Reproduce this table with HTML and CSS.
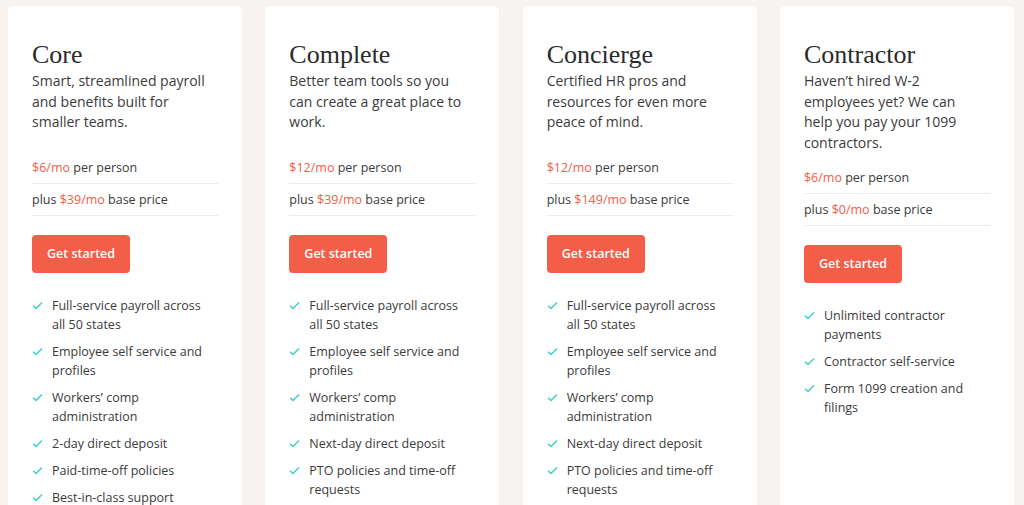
FILE: index.html
```html
<!DOCTYPE html>
<html lang="en">
<head>
<meta charset="utf-8">
<title>Pricing plans</title>
<link rel="stylesheet" href="styles.css">
</head>
<body>
<main class="plans">
  <section class="card">
    <h2 class="title">Core</h2>
    <p class="desc">Smart, streamlined payroll and benefits built for smaller teams.</p>
    <ul class="prices">
      <li><span class="accent">$6/mo</span> per person</li>
      <li>plus <span class="accent">$39/mo</span> base price</li>
    </ul>
    <a class="btn" href="#">Get started</a>
    <ul class="features">
      <li><svg class="check" viewBox="0 0 12 10"><path d="M1 5.2 4.3 8.4 11 1.6"/></svg><span>Full-service payroll across all 50 states</span></li>
      <li><svg class="check" viewBox="0 0 12 10"><path d="M1 5.2 4.3 8.4 11 1.6"/></svg><span>Employee self service and profiles</span></li>
      <li><svg class="check" viewBox="0 0 12 10"><path d="M1 5.2 4.3 8.4 11 1.6"/></svg><span>Workers’ comp administration</span></li>
      <li><svg class="check" viewBox="0 0 12 10"><path d="M1 5.2 4.3 8.4 11 1.6"/></svg><span>2-day direct deposit</span></li>
      <li><svg class="check" viewBox="0 0 12 10"><path d="M1 5.2 4.3 8.4 11 1.6"/></svg><span>Paid-time-off policies</span></li>
      <li><svg class="check" viewBox="0 0 12 10"><path d="M1 5.2 4.3 8.4 11 1.6"/></svg><span>Best-in-class support</span></li>
    </ul>
  </section>
  <section class="card">
    <h2 class="title">Complete</h2>
    <p class="desc">Better team tools so you can create a great place to work.</p>
    <ul class="prices">
      <li><span class="accent">$12/mo</span> per person</li>
      <li>plus <span class="accent">$39/mo</span> base price</li>
    </ul>
    <a class="btn" href="#">Get started</a>
    <ul class="features">
      <li><svg class="check" viewBox="0 0 12 10"><path d="M1 5.2 4.3 8.4 11 1.6"/></svg><span>Full-service payroll across all 50 states</span></li>
      <li><svg class="check" viewBox="0 0 12 10"><path d="M1 5.2 4.3 8.4 11 1.6"/></svg><span>Employee self service and profiles</span></li>
      <li><svg class="check" viewBox="0 0 12 10"><path d="M1 5.2 4.3 8.4 11 1.6"/></svg><span>Workers’ comp administration</span></li>
      <li><svg class="check" viewBox="0 0 12 10"><path d="M1 5.2 4.3 8.4 11 1.6"/></svg><span>Next-day direct deposit</span></li>
      <li><svg class="check" viewBox="0 0 12 10"><path d="M1 5.2 4.3 8.4 11 1.6"/></svg><span>PTO policies and time-off requests</span></li>
    </ul>
  </section>
  <section class="card">
    <h2 class="title">Concierge</h2>
    <p class="desc">Certified HR pros and resources for even more peace of mind.</p>
    <ul class="prices">
      <li><span class="accent">$12/mo</span> per person</li>
      <li>plus <span class="accent">$149/mo</span> base price</li>
    </ul>
    <a class="btn" href="#">Get started</a>
    <ul class="features">
      <li><svg class="check" viewBox="0 0 12 10"><path d="M1 5.2 4.3 8.4 11 1.6"/></svg><span>Full-service payroll across all 50 states</span></li>
      <li><svg class="check" viewBox="0 0 12 10"><path d="M1 5.2 4.3 8.4 11 1.6"/></svg><span>Employee self service and profiles</span></li>
      <li><svg class="check" viewBox="0 0 12 10"><path d="M1 5.2 4.3 8.4 11 1.6"/></svg><span>Workers’ comp administration</span></li>
      <li><svg class="check" viewBox="0 0 12 10"><path d="M1 5.2 4.3 8.4 11 1.6"/></svg><span>Next-day direct deposit</span></li>
      <li><svg class="check" viewBox="0 0 12 10"><path d="M1 5.2 4.3 8.4 11 1.6"/></svg><span>PTO policies and time-off requests</span></li>
    </ul>
  </section>
  <section class="card">
    <h2 class="title">Contractor</h2>
    <p class="desc">Haven’t hired W-2 employees yet? We can help you pay your 1099 contractors.</p>
    <ul class="prices">
      <li><span class="accent">$6/mo</span> per person</li>
      <li>plus <span class="accent">$0/mo</span> base price</li>
    </ul>
    <a class="btn" href="#">Get started</a>
    <ul class="features">
      <li><svg class="check" viewBox="0 0 12 10"><path d="M1 5.2 4.3 8.4 11 1.6"/></svg><span>Unlimited contractor payments</span></li>
      <li><svg class="check" viewBox="0 0 12 10"><path d="M1 5.2 4.3 8.4 11 1.6"/></svg><span>Contractor self-service</span></li>
      <li><svg class="check" viewBox="0 0 12 10"><path d="M1 5.2 4.3 8.4 11 1.6"/></svg><span>Form 1099 creation and filings</span></li>
    </ul>
  </section>
</main>
</body>
</html>
```

FILE: styles.css
```css
* { box-sizing: border-box; }
html, body { margin: 0; }
body {
  background: #f6f3f0;
  font-family: "Open Sans", "Liberation Sans", sans-serif;
  color: #3b3b3b;
  overflow: hidden;
  height: 505px;
}
.plans {
  display: grid;
  grid-template-columns: repeat(4, 1fr);
  gap: 23.3px;
  padding: 6px 10px 0 8px;
  align-items: stretch;
}
.card {
  background: #fff;
  border-radius: 5px;
  padding: 33px 24px 40px;
  min-height: 560px;
}
.title {
  font-family: "Liberation Serif", "Times New Roman", serif;
  font-weight: 400;
  font-size: 26px;
  line-height: 32px;
  margin: 0;
  color: #2b2b2b;
}
.desc {
  font-size: 14px;
  line-height: 20.5px;
  margin: 0 0 9px;
  padding-right: 12px;
  min-height: 71.5px;
}
.prices {
  list-style: none;
  margin: 0 0 19px;
  padding: 0;
  font-size: 12.5px;
}
.prices li {
  line-height: 16px;
  padding: 8px 0 7px;
  border-bottom: 1px solid #ececec;
}
.accent { color: #f45d48; font-weight: 500; }
.btn {
  display: inline-block;
  background: #f45d48;
  color: #fff;
  text-decoration: none;
  font-size: 12.5px;
  font-weight: 600;
  line-height: 38px;
  height: 38px;
  padding: 0 15px;
  border-radius: 4px;
}
.features {
  list-style: none;
  margin: 23px 0 0;
  padding: 0 10px 0 0;
  font-size: 12.5px;
  line-height: 19px;
  display: flex;
  flex-direction: column;
  gap: 8px;
}
.features li {
  display: flex;
  gap: 9px;
}
.check {
  flex: none;
  width: 11px;
  height: 9px;
  margin-top: 5px;
  fill: none;
  stroke: #3fcfc0;
  stroke-width: 1.6;
}
```
